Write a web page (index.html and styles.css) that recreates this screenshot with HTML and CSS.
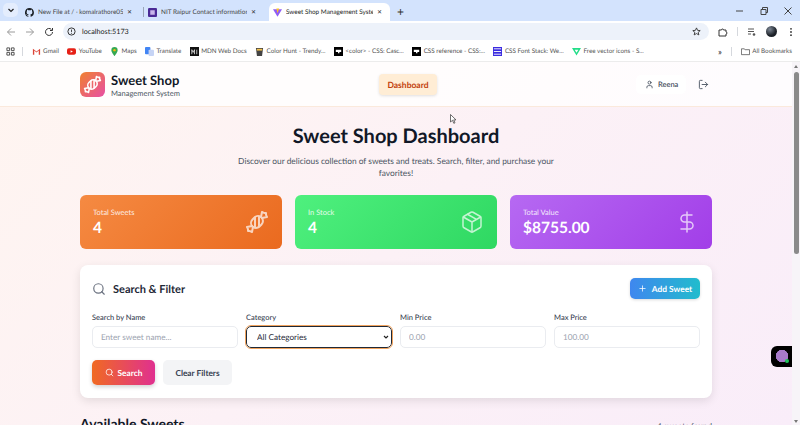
FILE: index.html
```html
<!DOCTYPE html>
<html lang="en">
<head>
    <meta charset="UTF-8">
    <meta name="viewport" content="width=device-width, initial-scale=1.0">
    <title>Sweet Shop Management System</title>
    <link rel="stylesheet" href="styles.css">
</head>
<body>
    <div class="tabstrip">
        <div class="tab-menu"><svg width="8" height="8" viewBox="0 0 8 8"><path d="M1.500 3 4 5.500 6.500 3" fill="none" stroke="#1f1f1f" stroke-width="1.200"/></svg></div>
        <div class="tab tab-first">
            <svg class="favicon" viewBox="0 0 16 16"><path fill="#1b1f24" d="M8 0a8 8 0 0 0-2.500 15.600c.4.100.5-.2.500-.4v-1.400c-2.200.5-2.700-1-2.700-1-.4-.9-.9-1.200-.9-1.200-.7-.5.100-.5.100-.5.800.100 1.200.8 1.200.8.700 1.200 1.900.9 2.300.7.100-.5.300-.9.500-1.100-1.800-.2-3.600-.9-3.600-4 0-.9.300-1.600.8-2.100-.1-.2-.4-1 .1-2.100 0 0 .7-.2 2.200.8a7.600 7.600 0 0 1 4 0c1.500-1 2.200-.8 2.200-.8.400 1.100.2 1.900.1 2.100.5.600.8 1.300.8 2.100 0 3.100-1.900 3.700-3.700 3.900.3.300.6.800.6 1.500v2.200c0 .2.100.5.600.4A8 8 0 0 0 8 0z"/></svg>
            <span class="tab-title">New File at / · komalrathore052</span>
            <span class="tab-close">✕</span>
        </div>
        <div class="tab-sep"></div>
        <div class="tab tab-second">
            <svg class="favicon" viewBox="0 0 16 16"><rect width="16" height="16" rx="2" fill="#4a2a96"/><rect x="4" y="4" width="8" height="8" fill="#c9b6ec"/></svg>
            <span class="tab-title">NIT Raipur Contact information</span>
            <span class="tab-close">✕</span>
        </div>
        <div class="tab tab-active">
            <svg class="favicon" viewBox="0 0 16 16"><path fill="#8f5cf6" d="M0 2h16L8 15.500z"/><path fill="#ffc31f" d="M6 1h5L8 9.500z"/></svg>
            <span class="tab-title">Sweet Shop Management Syste</span>
            <span class="tab-close">✕</span>
        </div>
        <div class="tab-new">+</div>
        <div class="win-controls">
            <svg width="10" height="10" viewBox="0 0 10 10"><path d="M1 5h7" stroke="#444" fill="none"/></svg>
            <svg width="10" height="10" viewBox="0 0 10 10"><path d="M2 3.500h5v5H2zM3.500 3.500V1.500h5v5H7" stroke="#444" fill="none"/></svg>
            <svg width="10" height="10" viewBox="0 0 10 10"><path d="M1.500 1.500l7 7M8.500 1.500l-7 7" stroke="#444" fill="none"/></svg>
        </div>
    </div>

    <div class="toolbar">
        <svg class="nav-icon nav-off" viewBox="0 0 10 10"><path d="M9 5H1.500M5 1.500 1.500 5 5 8.500" fill="none" stroke="currentColor"/></svg>
        <svg class="nav-icon nav-off" viewBox="0 0 10 10"><path d="M1 5h7.500M5 1.500 8.500 5 5 8.500" fill="none" stroke="currentColor"/></svg>
        <svg class="nav-icon" viewBox="0 0 10 10"><path d="M8.500 5A3.500 3.500 0 1 1 7.400 2.400M8.500 1v2.500H6" fill="none" stroke="currentColor"/></svg>
        <div class="omnibox">
            <svg width="9" height="9" viewBox="0 0 10 10"><circle cx="5" cy="5" r="4" fill="none" stroke="#333" stroke-width="1.100"/><path d="M5 2.800v2.700M5 6.500v1" stroke="#333"/></svg>
            <span class="url">localhost:5173</span>
            <svg class="star" width="9" height="9" viewBox="0 0 10 10"><path d="M5 1l1.200 2.700 2.900.3-2.200 1.900.7 2.900L5 7.300 2.400 8.800l.7-2.900L.9 4l2.900-.3z" fill="none" stroke="#333"/></svg>
        </div>
        <svg class="nav-icon" viewBox="0 0 10 10"><path d="M1 3h2.500a1 1 0 0 1 2 0H8v2a1 1 0 0 1 0 2v2H1z" fill="none" stroke="#333"/></svg>
        <div class="tool-sep"></div>
        <svg class="nav-icon" viewBox="0 0 10 10"><path d="M1 2h6M1 4.500h6M1 7h3" stroke="#555" fill="none"/><circle cx="7" cy="7.500" r="1.300" fill="#555"/></svg>
        <div class="avatar"></div>
        <svg class="nav-icon" viewBox="0 0 10 10"><circle cx="5" cy="1.800" r=".9" fill="#333"/><circle cx="5" cy="5" r=".9" fill="#333"/><circle cx="5" cy="8.200" r=".9" fill="#333"/></svg>
    </div>

    <div class="bookmarks">
        <svg class="bm-apps" viewBox="0 0 10 10"><path d="M1 1h3v3H1zM6 1h3v3H6zM1 6h3v3H1zM6 6h3v3H6z" fill="none" stroke="#444"/></svg>
        <div class="tool-sep"></div>
        <div class="bm"><svg class="bm-icon" viewBox="0 0 10 10"><path d="M1 2v6.500h1.500V4L5 6l2.500-2v4.500H9V2L5 5z" fill="#dc4437"/></svg>Gmail</div>
        <div class="bm"><svg class="bm-icon" viewBox="0 0 10 10"><rect y="1.500" width="10" height="7" rx="2" fill="#e62117"/><path d="M4 3.500 6.500 5 4 6.500z" fill="#fff"/></svg>YouTube</div>
        <div class="bm"><svg class="bm-icon" viewBox="0 0 10 10"><path d="M5 0a3.500 3.500 0 0 0-3.500 3.500C1.500 6 5 10 5 10s3.500-4 3.500-6.500A3.500 3.500 0 0 0 5 0z" fill="#34a853"/><circle cx="5" cy="3.500" r="1.300" fill="#fbbc04"/></svg>Maps</div>
        <div class="bm"><svg class="bm-icon" viewBox="0 0 10 10"><rect width="6" height="8" rx="1" fill="#4285f4"/><rect x="4" y="3" width="6" height="7" rx="1" fill="#c6d4f5"/></svg>Translate</div>
        <div class="bm"><svg class="bm-icon" viewBox="0 0 10 10"><rect width="10" height="10" fill="#111"/><path d="M2 8V3l1.500 3L5 3v5M7.500 3v5" stroke="#fff" stroke-width=".8" fill="none"/></svg>MDN Web Docs</div>
        <div class="bm"><svg class="bm-icon" viewBox="0 0 10 10"><path d="M1 1h8L8 8.500a3 3 0 0 1-6 0z" fill="#444"/><path d="M2 2h6v2H2z" fill="#f2c14e"/></svg>Color Hunt - Trendy...</div>
        <div class="bm"><svg class="bm-icon" viewBox="0 0 10 10"><rect width="10" height="10" fill="#000"/><path d="M2 3h6v2.500H6V7H4.500V5.500H2z" fill="#fff"/></svg>&lt;color&gt; - CSS: Casc...</div>
        <div class="bm"><svg class="bm-icon" viewBox="0 0 10 10"><rect width="10" height="10" fill="#000"/><path d="M2 3h6v2.500H6V7H4.500V5.500H2z" fill="#fff"/></svg>CSS reference - CSS:...</div>
        <div class="bm"><svg class="bm-icon" viewBox="0 0 10 10"><rect width="10" height="10" fill="#3a2be0"/><path d="M1 2h8M1 5h8M1 8h8" stroke="#fff"/></svg>CSS Font Stack: We...</div>
        <div class="bm"><svg class="bm-icon" viewBox="0 0 10 10"><path d="M0 1h10L5 9.500z" fill="#22dd88"/><path d="M3 3h4L5 6.500z" fill="#fff"/></svg>Free vector icons - S...</div>
        <div class="bm-end">
            <div class="bm-more">»</div>
            <div class="tool-sep"></div>
            <div class="bm"><svg class="bm-icon" viewBox="0 0 10 10"><path d="M.5 2h3l1 1h5v5.500h-9z" fill="none" stroke="#444" stroke-width=".8"/></svg>All Bookmarks</div>
        </div>
    </div>

    <div class="viewport">
        <div class="page">
            <header class="site-header">
                <div class="brand">
                    <div class="brand-logo">
                        <svg viewBox="0 0 24 24" width="19" height="19"><use href="#candy"/></svg>
                    </div>
                    <div class="brand-text">
                        <div class="brand-name">Sweet Shop</div>
                        <div class="brand-sub">Management System</div>
                    </div>
                </div>
                <div class="nav-pill">Dashboard</div>
                <div class="user-box">
                    <div class="user-chip">
                        <svg viewBox="0 0 24 24" width="9" height="9" class="line"><path d="M19 21v-2a4 4 0 0 0-4-4H9a4 4 0 0 0-4 4v2"/><circle cx="12" cy="7" r="4"/></svg>
                        <span class="user-name">Reena</span>
                    </div>
                    <svg viewBox="0 0 24 24" width="11" height="11" class="line logout"><path d="M9 21H5a2 2 0 0 1-2-2V5a2 2 0 0 1 2-2h4M16 17l5-5-5-5M21 12H9"/></svg>
                </div>
            </header>

            <main class="content">
                <h1>Sweet Shop Dashboard</h1>
                <p class="lead">Discover our delicious collection of sweets and treats. Search, filter, and purchase your favorites!</p>

                <div class="stats">
                    <div class="stat stat-orange">
                        <div class="stat-text">
                            <div class="stat-label">Total Sweets</div>
                            <div class="stat-value">4</div>
                        </div>
                        <svg viewBox="0 0 24 24" width="24" height="24" class="stat-icon"><use href="#candy"/></svg>
                    </div>
                    <div class="stat stat-green">
                        <div class="stat-text">
                            <div class="stat-label">In Stock</div>
                            <div class="stat-value">4</div>
                        </div>
                        <svg viewBox="0 0 24 24" width="24" height="24" class="stat-icon"><path d="M21 8a2 2 0 0 0-1-1.730l-7-4a2 2 0 0 0-2 0l-7 4A2 2 0 0 0 3 8v8a2 2 0 0 0 1 1.730l7 4a2 2 0 0 0 2 0l7-4A2 2 0 0 0 21 16z"/><path d="M12 22V12M3.300 7 12 12l8.700-5M7.500 4.270l9 5.150"/></svg>
                    </div>
                    <div class="stat stat-purple">
                        <div class="stat-text">
                            <div class="stat-label">Total Value</div>
                            <div class="stat-value">$8755.00</div>
                        </div>
                        <svg viewBox="0 0 24 24" width="24" height="24" class="stat-icon"><path d="M12 2v20M17 5H9.500a3.500 3.500 0 0 0 0 7h5a3.500 3.500 0 0 1 0 7H6"/></svg>
                    </div>
                </div>

                <section class="panel">
                    <div class="panel-head">
                        <svg viewBox="0 0 24 24" width="14" height="14" class="line search-big"><circle cx="11" cy="11" r="8"/><path d="m21 21-4.300-4.300"/></svg>
                        <h2>Search &amp; Filter</h2>
                        <button class="btn-add" type="button">
                            <svg viewBox="0 0 24 24" width="9" height="9" class="line"><path d="M5 12h14M12 5v14"/></svg>
                            Add Sweet
                        </button>
                    </div>
                    <div class="fields">
                        <div class="field">
                            <label for="name">Search by Name</label>
                            <input type="text" id="name" placeholder="Enter sweet name...">
                        </div>
                        <div class="field">
                            <label for="category">Category</label>
                            <select id="category" class="select-focus">
                                <option>All Categories</option>
                            </select>
                        </div>
                        <div class="field">
                            <label for="min">Min Price</label>
                            <input type="text" id="min" placeholder="0.00">
                        </div>
                        <div class="field">
                            <label for="max">Max Price</label>
                            <input type="text" id="max" placeholder="100.00">
                        </div>
                    </div>
                    <div class="actions">
                        <button class="btn-search" type="button">
                            <svg viewBox="0 0 24 24" width="9" height="9" class="line"><circle cx="11" cy="11" r="8"/><path d="m21 21-4.300-4.300"/></svg>
                            Search
                        </button>
                        <button class="btn-clear" type="button">Clear Filters</button>
                    </div>
                </section>

                <div class="list-head">
                    <h2>Available Sweets</h2>
                    <span class="found">4 sweets found</span>
                </div>
            </main>

            <div class="float-widget"><span class="float-dot"></span></div>
            <svg class="cursor" width="7" height="10" viewBox="0 0 7 10"><path d="M.5.500v7.500l2-1.700 1.300 3 1.200-.5-1.300-2.900H6z" fill="#fff" stroke="#333" stroke-width=".7"/></svg>
        </div>
        <div class="scrollbar">
            <span class="arrow-up"></span>
            <span class="thumb"></span>
            <span class="arrow-down"></span>
        </div>
    </div>

    <svg width="0" height="0" class="defs">
        <symbol id="candy" viewBox="0 0 24 24">
            <g fill="none" stroke="currentColor" stroke-width="2" stroke-linecap="round" stroke-linejoin="round">
                <path d="m9.500 7.500-2 2a4.240 4.240 0 1 0 7 7l2-2a4.240 4.240 0 1 0-7-7z"/>
                <path d="M14 6.500v10M10 7.500v10"/>
                <path d="m16 7 1-5 1.370.68A3 3 0 0 0 19.700 3H21v1.300c0 .46.100.92.320 1.330L22 7l-5 1"/>
                <path d="m8 17-1 5-1.370-.68A3 3 0 0 0 4.300 21H3v-1.300a3 3 0 0 0-.32-1.330L2 17l5-1"/>
            </g>
        </symbol>
    </svg>
</body>
</html>
```

FILE: styles.css
```css
* {
    box-sizing: border-box;
}
html, body {
    margin: 0;
    height: 425px;
    overflow: hidden;
}
body {
    font-family: Lato, "Open Sans", sans-serif;
    text-rendering: geometricPrecision;
    color: #1f2937;
    display: flex;
    flex-direction: column;
}
.defs {
    position: absolute;
}
button, input, select {
    font-family: inherit;
    text-rendering: inherit;
}

/* browser chrome */
.tabstrip {
    height: 21px;
    background: #d3e3fd;
    display: flex;
    align-items: flex-end;
    padding-left: 3px;
    font-size: 6.400px;
    color: #444;
}
.tab-menu {
    width: 15px;
    height: 14px;
    margin: 0 3px 4px 0;
    background: #e4edfd;
    border-radius: 5px;
    display: flex;
    align-items: center;
    justify-content: center;
}
.tab {
    height: 18px;
    display: flex;
    align-items: center;
    gap: 4px;
    padding: 0 4px;
    white-space: nowrap;
}
.tab-first {
    width: 119px;
}
.tab-second {
    width: 120px;
}
.tab-sep {
    width: 1px;
    height: 10px;
    margin: 0 0 4px 3px;
    background: #9aa6b8;
}
.tab-active {
    width: 121px;
    margin-left: 5px;
    background: #fff;
    border-radius: 6px 6px 0 0;
    color: #222;
}
.favicon {
    width: 9px;
    height: 9px;
    flex: none;
}
.tab-title {
    flex: 1;
    min-width: 0;
    overflow: hidden;
}
.tab-close {
    font-size: 6px;
    width: 9px;
    color: #333;
}
.tab-new {
    font-size: 12px;
    line-height: 14px;
    margin: 0 0 2px 7px;
    color: #333;
}
.win-controls {
    margin-left: auto;
    height: 21px;
    display: flex;
    align-items: center;
    gap: 14px;
    padding-right: 7px;
}

.toolbar {
    height: 21px;
    background: #fff;
    display: flex;
    align-items: center;
    padding-left: 6px;
    gap: 9px;
}
.nav-icon {
    width: 10px;
    height: 10px;
    color: #333;
    flex: none;
}
.nav-off {
    color: #9a9a9a;
}
.omnibox {
    width: 646px;
    height: 17px;
    background: #edf2fa;
    border-radius: 9px;
    display: flex;
    align-items: center;
    padding: 0 8px 0 4px;
    gap: 6px;
}
.url {
    font-size: 7.200px;
    color: #222;
}
.star {
    margin-left: auto;
}
.tool-sep {
    width: 1px;
    height: 9px;
    background: #d5d8dd;
    flex: none;
}
.avatar {
    width: 11px;
    height: 11px;
    border-radius: 50%;
    background: radial-gradient(circle at 35% 30%, #7d8794, #1c2128 60%);
    flex: none;
}

.bookmarks {
    height: 20px;
    background: #fff;
    display: flex;
    align-items: center;
    padding-left: 6px;
    font-size: 6.300px;
    color: #555;
    white-space: nowrap;
    gap: 8.300px;
    border-bottom: 1px solid #ececec;
}
.bm-apps {
    width: 9px;
    height: 9px;
    margin-right: -1px;
}
.bm {
    display: flex;
    align-items: center;
    gap: 2.500px;
}
.bm-icon {
    width: 9px;
    height: 9px;
    flex: none;
}
.bm-end {
    margin-left: auto;
    display: flex;
    align-items: center;
    gap: 9px;
    padding-right: 8px;
}
.bm-more {
    font-size: 9px;
    color: #333;
}

/* page */
.viewport {
    flex: 1;
    display: flex;
    min-height: 0;
}
.page {
    flex: 1;
    position: relative;
    overflow: hidden;
    background: linear-gradient(135deg, #fff5f0, #fcf1f6 50%, #f9edf9);
}
.scrollbar {
    width: 8px;
    background: #f7f4f8;
    display: flex;
    flex-direction: column;
    align-items: center;
    padding: 3px 0 2px;
}
.arrow-up, .arrow-down {
    width: 0;
    height: 0;
    border-left: 2.500px solid transparent;
    border-right: 2.500px solid transparent;
}
.arrow-up {
    border-bottom: 3px solid #777;
}
.arrow-down {
    margin-top: auto;
    border-top: 3px solid #777;
}
.thumb {
    width: 5px;
    height: 182px;
    margin-top: 4px;
    background: #8a8a8a;
    border-radius: 3px;
}

.site-header {
    height: 45px;
    padding: 0 80px;
    background: rgba(255, 255, 255, .8);
    border-bottom: 1px solid #fbe9dc;
    display: flex;
    justify-content: space-between;
    align-items: center;
}
.brand {
    display: flex;
    align-items: center;
    gap: 6px;
    width: 100px;
    white-space: nowrap;
}
.brand-logo {
    width: 25px;
    height: 25px;
    flex: none;
    border-radius: 6px;
    background: linear-gradient(135deg, #f0812f, #e74fa5);
    color: #fff;
    display: flex;
    align-items: center;
    justify-content: center;
}
.brand-text {
    padding-top: 4px;
}
.brand-name {
    font-size: 13px;
    font-weight: 700;
    line-height: 15px;
    color: #111827;
}
.brand-sub {
    font-size: 7.500px;
    line-height: 12px;
    color: #4b5563;
}
.nav-pill {
    width: 58px;
    height: 21px;
    margin-top: 1px;
    line-height: 22px;
    text-align: center;
    font-size: 8.500px;
    font-weight: 700;
    color: #c2410c;
    background: #ffedd5;
    border-radius: 4px;
    box-shadow: 0 1px 3px rgba(0, 0, 0, .12);
}
.user-box {
    width: 76px;
    display: flex;
    align-items: center;
    gap: 12px;
}
.user-chip {
    display: flex;
    align-items: center;
    gap: 4px;
    width: 50px;
    height: 19px;
    padding-left: 9px;
    font-size: 7.500px;
    font-weight: 500;
    background: #fff;
    border-radius: 5px;
    color: #374151;
}
.user-name {
    padding-top: 1px;
}
.line {
    fill: none;
    stroke: currentColor;
    stroke-width: 2;
    stroke-linecap: round;
    stroke-linejoin: round;
    flex: none;
}
.logout {
    color: #4b5563;
}

.content {
    padding: 0 80px;
}
h1 {
    margin: 17px 0 0;
    font-size: 20px;
    line-height: 24px;
    font-weight: 700;
    text-align: center;
    color: #111827;
}
.lead {
    width: 340px;
    margin: 7px auto 0;
    font-size: 8.400px;
    line-height: 12px;
    text-align: center;
    color: #4b5563;
}
.stats {
    display: grid;
    grid-template-columns: repeat(3, 1fr);
    gap: 13px;
    margin-top: 16px;
}
.stat {
    height: 54px;
    border-radius: 6px;
    padding: 0 13px;
    display: flex;
    align-items: center;
    justify-content: space-between;
    color: #fff;
}
.stat-text {
    padding-top: 2px;
}
.stat-orange {
    background: linear-gradient(135deg, #f58a42, #ea6a1f);
}
.stat-green {
    background: linear-gradient(135deg, #4ff07e, #2fd862);
}
.stat-purple {
    background: linear-gradient(135deg, #b669f2, #a23ee8);
}
.stat-label {
    font-size: 7.500px;
    line-height: 10px;
    opacity: .85;
}
.stat-value {
    font-size: 15.500px;
    line-height: 20px;
    font-weight: 700;
}
.stat-icon {
    fill: none;
    stroke: currentColor;
    stroke-width: 1.500;
    stroke-linecap: round;
    stroke-linejoin: round;
    opacity: .7;
    flex: none;
}

.panel {
    margin-top: 16px;
    height: 133px;
    padding: 13px 12px;
    background: #fff;
    border-radius: 8px;
    box-shadow: 0 3px 10px rgba(0, 0, 0, .1);
}
.panel-head {
    display: flex;
    align-items: center;
    gap: 7px;
    height: 21px;
}
.panel-head h2 {
    margin: 0;
    padding-top: 2px;
    font-size: 11px;
    font-weight: 700;
    color: #1f2937;
}
.search-big {
    color: #6b7280;
}
.btn-add {
    margin-left: auto;
    height: 21px;
    width: 70px;
    border: none;
    border-radius: 5px;
    padding: 0;
    background: linear-gradient(90deg, #3f87ef, #21bccd);
    color: #fff;
    font-size: 8.400px;
    font-weight: 700;
    display: flex;
    align-items: center;
    justify-content: center;
    gap: 5px;
    box-shadow: 0 1px 3px rgba(0, 0, 0, .15);
}
.fields {
    display: grid;
    grid-template-columns: repeat(4, 1fr);
    gap: 8px;
    margin-top: 14px;
}
.field {
    display: flex;
    flex-direction: column;
}
label {
    font-size: 7.500px;
    line-height: 10px;
    font-weight: 500;
    color: #374151;
    margin-bottom: 3px;
}
input, select {
    height: 22px;
    width: 100%;
    font-size: 8.200px;
    border: 1px solid #eaecf0;
    border-radius: 5px;
    padding: 0 8px;
    background: #fff;
    color: #1f2937;
}
input::placeholder {
    color: #9ca3af;
}
.select-focus {
    appearance: none;
    border: 1.500px solid #1f2937;
    outline: 1px solid #f0a35e;
    outline-offset: 0;
    padding-left: 10px;
    background: #fff url("data:image/svg+xml,%3Csvg xmlns='http://www.w3.org/2000/svg' width='6' height='6' viewBox='0 0 6 6'%3E%3Cpath d='M1 2l2 2 2-2' fill='none' stroke='%23222' stroke-width='1.200'/%3E%3C/svg%3E") no-repeat right 2px center;
}
.actions {
    display: flex;
    gap: 8px;
    margin-top: 12px;
}
.btn-search, .btn-clear {
    height: 25px;
    border: none;
    border-radius: 5px;
    font-size: 8.300px;
    font-weight: 700;
    padding: 0;
}
.btn-search {
    width: 63px;
    background: linear-gradient(90deg, #f06a22, #e0308f);
    color: #fff;
    display: flex;
    align-items: center;
    justify-content: center;
    gap: 4px;
    box-shadow: 0 2px 4px rgba(0, 0, 0, .18);
}
.btn-clear {
    width: 69px;
    background: #f3f4f6;
    color: #374151;
}
.list-head {
    display: flex;
    justify-content: space-between;
    align-items: baseline;
    margin-top: 17px;
}
.list-head h2 {
    margin: 0;
    font-size: 14px;
    font-weight: 700;
    color: #111827;
}
.found {
    font-size: 8.200px;
    color: #4b5563;
}
.float-widget {
    position: absolute;
    right: 0;
    top: 284px;
    width: 21px;
    height: 21px;
    background: #000 radial-gradient(circle at 11px 10px, #a77ac9 0 6px, transparent 6.500px);
    border-radius: 6px 0 0 6px;
}
.float-dot {
    position: absolute;
    right: 3px;
    bottom: 4px;
    width: 4px;
    height: 4px;
    border-radius: 50%;
    background: #22c55e;
}
.cursor {
    position: absolute;
    left: 450px;
    top: 52px;
}
```
